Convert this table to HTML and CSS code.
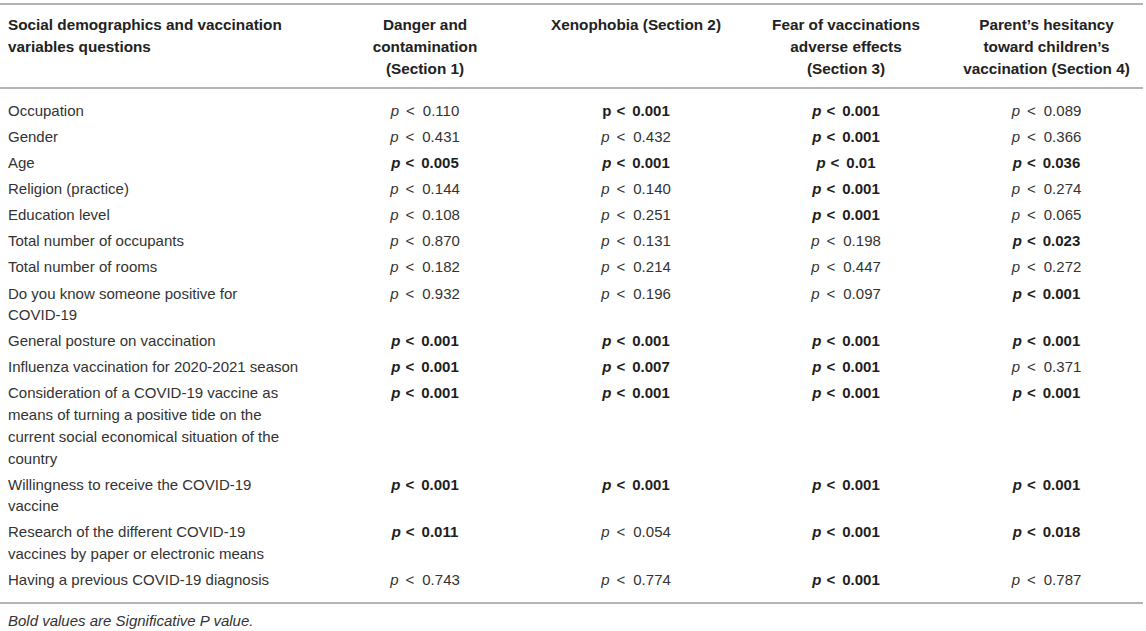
FILE: index.html
```html
<!DOCTYPE html>
<html lang="en">
<head>
<meta charset="utf-8">
<title>Table</title>
<link rel="stylesheet" href="styles.css">
</head>
<body>
<div class="wrap">
<table class="stats">
  <colgroup>
    <col class="c1"><col class="c2"><col class="c3"><col class="c4"><col class="c5">
  </colgroup>
  <thead>
    <tr>
      <th class="lead">Social demographics and vaccination variables questions</th>
      <th>Danger and<br>contamination<br>(Section 1)</th>
      <th>Xenophobia (Section 2)</th>
      <th>Fear of vaccinations<br>adverse effects<br>(Section 3)</th>
      <th>Parent’s hesitancy<br>toward children’s<br>vaccination (Section 4)</th>
    </tr>
  </thead>
  <tbody>
    <tr>
      <td class="lead">Occupation</td>
      <td><i>p</i><span class="lt">&lt;</span>0.110</td>
      <td><b>p<span class="lt">&lt;</span>0.001</b></td>
      <td><b><i>p</i><span class="lt">&lt;</span>0.001</b></td>
      <td><i>p</i><span class="lt">&lt;</span>0.089</td>
    </tr>
    <tr>
      <td class="lead">Gender</td>
      <td><i>p</i><span class="lt">&lt;</span>0.431</td>
      <td><i>p</i><span class="lt">&lt;</span>0.432</td>
      <td><b><i>p</i><span class="lt">&lt;</span>0.001</b></td>
      <td><i>p</i><span class="lt">&lt;</span>0.366</td>
    </tr>
    <tr>
      <td class="lead">Age</td>
      <td><b><i>p</i><span class="lt">&lt;</span>0.005</b></td>
      <td><b><i>p</i><span class="lt">&lt;</span>0.001</b></td>
      <td><b><i>p</i><span class="lt">&lt;</span>0.01</b></td>
      <td><b><i>p</i><span class="lt">&lt;</span>0.036</b></td>
    </tr>
    <tr>
      <td class="lead">Religion (practice)</td>
      <td><i>p</i><span class="lt">&lt;</span>0.144</td>
      <td><i>p</i><span class="lt">&lt;</span>0.140</td>
      <td><b><i>p</i><span class="lt">&lt;</span>0.001</b></td>
      <td><i>p</i><span class="lt">&lt;</span>0.274</td>
    </tr>
    <tr>
      <td class="lead">Education level</td>
      <td><i>p</i><span class="lt">&lt;</span>0.108</td>
      <td><i>p</i><span class="lt">&lt;</span>0.251</td>
      <td><b><i>p</i><span class="lt">&lt;</span>0.001</b></td>
      <td><i>p</i><span class="lt">&lt;</span>0.065</td>
    </tr>
    <tr>
      <td class="lead">Total number of occupants</td>
      <td><i>p</i><span class="lt">&lt;</span>0.870</td>
      <td><i>p</i><span class="lt">&lt;</span>0.131</td>
      <td><i>p</i><span class="lt">&lt;</span>0.198</td>
      <td><b><i>p</i><span class="lt">&lt;</span>0.023</b></td>
    </tr>
    <tr>
      <td class="lead">Total number of rooms</td>
      <td><i>p</i><span class="lt">&lt;</span>0.182</td>
      <td><i>p</i><span class="lt">&lt;</span>0.214</td>
      <td><i>p</i><span class="lt">&lt;</span>0.447</td>
      <td><i>p</i><span class="lt">&lt;</span>0.272</td>
    </tr>
    <tr>
      <td class="lead">Do you know someone positive for<br>COVID-19</td>
      <td><i>p</i><span class="lt">&lt;</span>0.932</td>
      <td><i>p</i><span class="lt">&lt;</span>0.196</td>
      <td><i>p</i><span class="lt">&lt;</span>0.097</td>
      <td><b><i>p</i><span class="lt">&lt;</span>0.001</b></td>
    </tr>
    <tr>
      <td class="lead">General posture on vaccination</td>
      <td><b><i>p</i><span class="lt">&lt;</span>0.001</b></td>
      <td><b><i>p</i><span class="lt">&lt;</span>0.001</b></td>
      <td><b><i>p</i><span class="lt">&lt;</span>0.001</b></td>
      <td><b><i>p</i><span class="lt">&lt;</span>0.001</b></td>
    </tr>
    <tr>
      <td class="lead">Influenza vaccination for 2020-2021 season</td>
      <td><b><i>p</i><span class="lt">&lt;</span>0.001</b></td>
      <td><b><i>p</i><span class="lt">&lt;</span>0.007</b></td>
      <td><b><i>p</i><span class="lt">&lt;</span>0.001</b></td>
      <td><i>p</i><span class="lt">&lt;</span>0.371</td>
    </tr>
    <tr>
      <td class="lead">Consideration of a COVID-19 vaccine as means of turning a positive tide on the current social economical situation of the country</td>
      <td><b><i>p</i><span class="lt">&lt;</span>0.001</b></td>
      <td><b><i>p</i><span class="lt">&lt;</span>0.001</b></td>
      <td><b><i>p</i><span class="lt">&lt;</span>0.001</b></td>
      <td><b><i>p</i><span class="lt">&lt;</span>0.001</b></td>
    </tr>
    <tr>
      <td class="lead">Willingness to receive the COVID-19 vaccine</td>
      <td><b><i>p</i><span class="lt">&lt;</span>0.001</b></td>
      <td><b><i>p</i><span class="lt">&lt;</span>0.001</b></td>
      <td><b><i>p</i><span class="lt">&lt;</span>0.001</b></td>
      <td><b><i>p</i><span class="lt">&lt;</span>0.001</b></td>
    </tr>
    <tr>
      <td class="lead">Research of the different COVID-19 vaccines by paper or electronic means</td>
      <td><b><i>p</i><span class="lt">&lt;</span>0.011</b></td>
      <td><i>p</i><span class="lt">&lt;</span>0.054</td>
      <td><b><i>p</i><span class="lt">&lt;</span>0.001</b></td>
      <td><b><i>p</i><span class="lt">&lt;</span>0.018</b></td>
    </tr>
    <tr>
      <td class="lead">Having a previous COVID-19 diagnosis</td>
      <td><i>p</i><span class="lt">&lt;</span>0.743</td>
      <td><i>p</i><span class="lt">&lt;</span>0.774</td>
      <td><b><i>p</i><span class="lt">&lt;</span>0.001</b></td>
      <td><i>p</i><span class="lt">&lt;</span>0.787</td>
    </tr>
  </tbody>
</table>
<p class="note">Bold values are Significative P value.</p>
</div>
</body>
</html>
```
FILE: styles.css
```css
html, body {
  margin: 0;
  padding: 0;
  background: #ffffff;
}
body {
  font-family: "Liberation Sans", Arial, Helvetica, sans-serif;
  font-size: 15px;
  color: #333333;
}
.wrap {
  width: 1143px;
  padding-top: 3px;
}
.stats {
  width: 1143px;
  table-layout: fixed;
  border-collapse: collapse;
  border-top: 2px solid #b4b4b4;
  border-bottom: 2px solid #b4b4b4;
}
.c1 { width: 320px; }
.c2 { width: 210px; }
.c3 { width: 212px; }
.c4 { width: 208px; }
.c5 { width: 193px; }
.stats thead tr {
  border-bottom: 2px solid #b4b4b4;
}
.stats th {
  font-size: 15.3px;
  font-weight: bold;
  color: #222222;
  text-align: center;
  vertical-align: top;
  line-height: 22px;
  padding: 9px 8px 7px 8px;
}
.stats th.lead {
  text-align: left;
  padding-left: 8px;
  padding-right: 14px;
}
.stats td {
  text-align: center;
  vertical-align: top;
  line-height: 21.7px;
  padding: 2.2px 10px;
}
.stats td.lead {
  text-align: left;
  padding-left: 8px;
  padding-right: 14px;
}
.stats tbody tr:first-child td {
  padding-top: 11px;
}
.stats tbody tr:last-child td {
  padding-bottom: 11px;
}
.lt {
  display: inline-block;
  margin: 0 8px 0 7px;
  font-weight: normal;
}
.stats b {
  color: #1e1e1e;
}
.stats b .lt {
  margin: 0 7px 0 5px;
  font-weight: bold;
}
.note {
  margin: 6px 0 0 0;
  padding-left: 8px;
  font-style: italic;
  line-height: 21.7px;
}
```
